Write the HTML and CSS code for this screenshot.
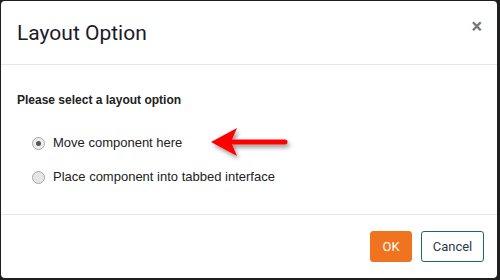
FILE: index.html
```
<!DOCTYPE html>
<html>
<head>
<meta charset="utf-8">
<link rel="stylesheet" href="styles.css">
</head>
<body>
<div class="dialog">
  <div class="header">
    <h1 class="title">Layout Option</h1>
    <span class="close">×</span>
  </div>
  <div class="body">
    <p class="prompt">Please select a layout option</p>
    <div class="options">
      <label class="option"><span class="radio checked"></span>Move component here</label>
      <label class="option"><span class="radio"></span>Place component into tabbed interface</label>
    </div>
    <svg class="arrow" width="90" height="40" viewBox="0 0 90 40">
      <defs>
        <filter id="sh" x="-20%" y="-40%" width="140%" height="180%">
          <feGaussianBlur in="SourceAlpha" stdDeviation="2"/>
          <feOffset dx="2" dy="3"/>
          <feComponentTransfer><feFuncA type="linear" slope="0.4"/></feComponentTransfer>
          <feMerge><feMergeNode/><feMergeNode in="SourceGraphic"/></feMerge>
        </filter>
      </defs>
      <g filter="url(#sh)">
        <line x1="30" y1="20" x2="82" y2="20" stroke="#f00" stroke-width="5" stroke-linecap="round"/>
        <path d="M8 20 L34 6 L28 20 L34 34 Z" fill="#f00"/>
      </g>
    </svg>
  </div>
  <div class="footer">
    <button class="btn ok">OK</button>
    <button class="btn cancel">Cancel</button>
  </div>
</div>
</body>
</html>
```
FILE: styles.css
```
html, body {
  margin: 0;
  padding: 0;
  background: #1f1f1f;
  width: 500px;
  height: 280px;
  overflow: hidden;
}
.dialog {
  margin: 1px 3px 0 1px;
  width: 496px;
  height: 277px;
  background: #fff;
  border-radius: 4px;
  display: flex;
  flex-direction: column;
  font-family: Roboto, "Liberation Sans", sans-serif;
}
.header {
  height: 63px;
  border-bottom: 1px solid #e3e6ea;
  display: flex;
  align-items: center;
  justify-content: space-between;
  padding: 0 16px;
  box-sizing: content-box;
}
.title {
  margin: 0;
  font-size: 21px;
  font-weight: 400;
  color: #1b1b2a;
}
.close {
  font-size: 20px;
  font-weight: 700;
  color: #777;
  margin-top: -13px;
  margin-right: -1px;
}
.body {
  position: relative;
  flex: 1;
  padding: 28px 16px 0 16px;
  border-bottom: 1px solid #e8e8e8;
}
.prompt {
  margin: 0;
  font-family: "Liberation Sans", Arial, sans-serif;
  font-weight: 700;
  font-size: 12px;
  color: #222;
}
.options {
  margin-top: 28px;
  padding-left: 15px;
  display: flex;
  flex-direction: column;
  gap: 18px;
}
.option {
  display: flex;
  align-items: center;
  font-family: "Liberation Sans", Arial, sans-serif;
  font-size: 13px;
  color: #222;
  line-height: 16px;
}
.radio {
  width: 13px;
  height: 13px;
  border-radius: 50%;
  border: 1px solid #a8a8a8;
  background: #e6e6e6;
  margin-right: 8px;
  position: relative;
  box-sizing: border-box;
}
.radio.checked {
  background: #eee;
}
.radio.checked::after {
  content: "";
  position: absolute;
  left: 3px;
  top: 3px;
  width: 5px;
  height: 5px;
  border-radius: 50%;
  background: #555;
}
.arrow {
  position: absolute;
  left: 202px;
  top: 57px;
}
.footer {
  height: 63px;
  display: flex;
  justify-content: flex-end;
  align-items: center;
  gap: 9px;
  padding: 0 13px;
}
.btn {
  height: 31px;
  border-radius: 3px;
  font-family: Roboto, "Liberation Sans", sans-serif;
  font-size: 13px;
  padding: 0;
  cursor: pointer;
}
.ok {
  background: #f07320;
  border: 1px solid #f07320;
  color: #fff;
  width: 42px;
}
.cancel {
  background: #fff;
  border: 1px solid #1a6a5e;
  color: #2a3a4a;
  width: 63px;
}
```
